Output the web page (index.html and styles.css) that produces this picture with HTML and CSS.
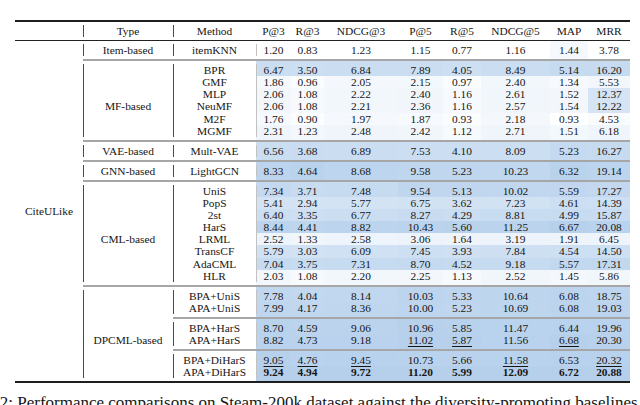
FILE: index.html
```html
<!DOCTYPE html>
<html lang="en">
<head>
<meta charset="utf-8">
<title>Performance comparison</title>
<link rel="stylesheet" href="styles.css">
</head>
<body>
<div class="prev"><p>results of the top-performing approaches, with the best highlighted in bold and the second-best underlined, are given in gray</p></div>
<table class="res">
  <colgroup>
    <col class="c-ds"><col class="c-type"><col class="c-method">
    <col class="c-p3"><col class="c-r3"><col class="c-n3"><col class="c-p5"><col class="c-r5"><col class="c-n5"><col class="c-map"><col class="c-mrr">
  </colgroup>
  <thead>
    <tr><th class="ds"></th><th class="t">Type</th><th class="m">Method</th><th>P@3</th><th>R@3</th><th>NDCG@3</th><th>P@5</th><th>R@5</th><th>NDCG@5</th><th>MAP</th><th>MRR</th></tr>
  </thead>
  <tbody>
    <tr class="first last"><td class="ds" rowspan="23">CiteULike</td><td class="t">Item-based</td><td class="m">itemKNN</td><td class="n p3">1.20</td><td class="n">0.83</td><td class="n">1.23</td><td class="n">1.15</td><td class="n">0.77</td><td class="n">1.16</td><td class="n">1.44</td><td class="n">3.78</td></tr>

    <tr class="rule first"><td class="t mf" rowspan="6">MF-based</td><td class="m">BPR</td><td class="n p3">6.47</td><td class="n">3.50</td><td class="n">6.84</td><td class="n">7.89</td><td class="n">4.05</td><td class="n">8.49</td><td class="n">5.14</td><td class="n">16.20</td></tr>
    <tr><td class="m">GMF</td><td class="n p3">1.86</td><td class="n">0.96</td><td class="n">2.05</td><td class="n">2.15</td><td class="n">0.97</td><td class="n">2.40</td><td class="n">1.34</td><td class="n">5.53</td></tr>
    <tr><td class="m">MLP</td><td class="n p3">2.06</td><td class="n">1.08</td><td class="n">2.22</td><td class="n">2.40</td><td class="n">1.16</td><td class="n">2.61</td><td class="n">1.52</td><td class="n">12.37</td></tr>
    <tr><td class="m">NeuMF</td><td class="n p3">2.06</td><td class="n">1.08</td><td class="n">2.21</td><td class="n">2.36</td><td class="n">1.16</td><td class="n">2.57</td><td class="n">1.54</td><td class="n">12.22</td></tr>
    <tr><td class="m">M2F</td><td class="n p3">1.76</td><td class="n">0.90</td><td class="n">1.97</td><td class="n">1.87</td><td class="n">0.93</td><td class="n">2.18</td><td class="n">0.93</td><td class="n">4.53</td></tr>
    <tr class="last"><td class="m">MGMF</td><td class="n p3">2.31</td><td class="n">1.23</td><td class="n">2.48</td><td class="n">2.42</td><td class="n">1.12</td><td class="n">2.71</td><td class="n">1.51</td><td class="n">6.18</td></tr>

    <tr class="rule first last"><td class="t">VAE-based</td><td class="m">Mult-VAE</td><td class="n p3">6.56</td><td class="n">3.68</td><td class="n">6.89</td><td class="n">7.53</td><td class="n">4.10</td><td class="n">8.09</td><td class="n">5.23</td><td class="n">16.27</td></tr>

    <tr class="rule first last"><td class="t">GNN-based</td><td class="m">LightGCN</td><td class="n p3">8.33</td><td class="n">4.64</td><td class="n">8.68</td><td class="n">9.58</td><td class="n">5.23</td><td class="n">10.23</td><td class="n">6.32</td><td class="n">19.14</td></tr>

    <tr class="rule first"><td class="t cml" rowspan="8">CML-based</td><td class="m">UniS</td><td class="n p3">7.34</td><td class="n">3.71</td><td class="n">7.48</td><td class="n">9.54</td><td class="n">5.13</td><td class="n">10.02</td><td class="n">5.59</td><td class="n">17.27</td></tr>
    <tr><td class="m">PopS</td><td class="n p3">5.41</td><td class="n">2.94</td><td class="n">5.77</td><td class="n">6.75</td><td class="n">3.62</td><td class="n">7.23</td><td class="n">4.61</td><td class="n">14.39</td></tr>
    <tr><td class="m">2st</td><td class="n p3">6.40</td><td class="n">3.35</td><td class="n">6.77</td><td class="n">8.27</td><td class="n">4.29</td><td class="n">8.81</td><td class="n">4.99</td><td class="n">15.87</td></tr>
    <tr><td class="m">HarS</td><td class="n p3">8.44</td><td class="n">4.41</td><td class="n">8.82</td><td class="n">10.43</td><td class="n">5.60</td><td class="n">11.25</td><td class="n">6.67</td><td class="n">20.08</td></tr>
    <tr><td class="m">LRML</td><td class="n p3">2.52</td><td class="n">1.33</td><td class="n">2.58</td><td class="n">3.06</td><td class="n">1.64</td><td class="n">3.19</td><td class="n">1.91</td><td class="n">6.45</td></tr>
    <tr><td class="m">TransCF</td><td class="n p3">5.79</td><td class="n">3.03</td><td class="n">6.09</td><td class="n">7.45</td><td class="n">3.93</td><td class="n">7.84</td><td class="n">4.54</td><td class="n">14.50</td></tr>
    <tr><td class="m">AdaCML</td><td class="n p3">7.04</td><td class="n">3.75</td><td class="n">7.31</td><td class="n">8.70</td><td class="n">4.52</td><td class="n">9.18</td><td class="n">5.57</td><td class="n">17.31</td></tr>
    <tr class="last"><td class="m">HLR</td><td class="n p3">2.03</td><td class="n">1.08</td><td class="n">2.20</td><td class="n">2.25</td><td class="n">1.13</td><td class="n">2.52</td><td class="n">1.45</td><td class="n">5.86</td></tr>

    <tr class="rule first"><td class="t dp" rowspan="6">DPCML-based</td><td class="m">BPA+UniS</td><td class="n p3">7.78</td><td class="n">4.04</td><td class="n">8.14</td><td class="n">10.03</td><td class="n">5.33</td><td class="n">10.64</td><td class="n">6.08</td><td class="n">18.75</td></tr>
    <tr class="last"><td class="m">APA+UniS</td><td class="n p3">7.99</td><td class="n">4.17</td><td class="n">8.36</td><td class="n">10.00</td><td class="n">5.23</td><td class="n">10.69</td><td class="n">6.08</td><td class="n">19.03</td></tr>
    <tr class="rule first"><td class="m">BPA+HarS</td><td class="n p3">8.70</td><td class="n">4.59</td><td class="n">9.06</td><td class="n">10.96</td><td class="n">5.85</td><td class="n">11.47</td><td class="n">6.44</td><td class="n">19.96</td></tr>
    <tr class="last"><td class="m">APA+HarS</td><td class="n p3">8.82</td><td class="n">4.73</td><td class="n">9.18</td><td class="n"><span class="u">11.02</span></td><td class="n"><span class="u">5.87</span></td><td class="n">11.56</td><td class="n"><span class="u">6.68</span></td><td class="n">20.30</td></tr>
    <tr class="rule first"><td class="m">BPA+DiHarS</td><td class="n p3"><span class="u">9.05</span></td><td class="n"><span class="u">4.76</span></td><td class="n"><span class="u">9.45</span></td><td class="n">10.73</td><td class="n">5.66</td><td class="n"><span class="u">11.58</span></td><td class="n">6.53</td><td class="n"><span class="u">20.32</span></td></tr>
    <tr class="last"><td class="m">APA+DiHarS</td><td class="n p3"><b>9.24</b></td><td class="n"><b>4.94</b></td><td class="n"><b>9.72</b></td><td class="n"><b>11.20</b></td><td class="n"><b>5.99</b></td><td class="n"><b>12.09</b></td><td class="n"><b>6.72</b></td><td class="n"><b>20.88</b></td></tr>
  </tbody>
</table>
<p class="cap">Table 2: Performance comparisons on Steam-200k dataset against the diversity-promoting baselines and</p>
<script src="script.js"></script>
</body>
</html>
```

FILE: styles.css
```css
html, body {
  margin: 0;
  padding: 0;
  background: #ffffff;
}
body {
  width: 640px;
  height: 405px;
  overflow: hidden;
  font-family: "Liberation Serif", "Times New Roman", serif;
  color: #161616;
}

.prev {
  height: 6px;
  overflow: hidden;
  font-size: 17px;
  line-height: 20px;
}
.prev p {
  margin: -19px 0 0 4px;
  white-space: nowrap;
}

.res {
  margin: 14px 0 0 15px;
  width: 615px;
  table-layout: fixed;
  border-collapse: separate;
  border-spacing: 0;
  border-top: 2px solid #1e1e1e;
  border-bottom: 2px solid #1e1e1e;
  font-size: 11.4px;
  line-height: 12.1px;
}
.c-ds { width: 68px; }
.c-type { width: 90px; }
.c-method { width: 83px; }
.c-p3 { width: 35px; }
.c-r3 { width: 33px; }
.c-n3 { width: 74px; }
.c-p5 { width: 45px; }
.c-r5 { width: 38px; }
.c-n5 { width: 69px; }
.c-map { width: 38px; }
.c-mrr { width: 42px; }

.res th, .res td {
  padding: 0;
  text-align: center;
  white-space: nowrap;
  font-weight: normal;
  vertical-align: middle;
}
.res thead th {
  padding: 3px 0;
  border-bottom: 1px solid #222;
}

/* vertical bars drawn only over the row content, broken at the rules */
.res th.t, .res th.m,
.res td.t, .res td.m, .res td.p3 {
  --bc: #4a4a4a;
  background-image: linear-gradient(var(--bc), var(--bc));
  background-repeat: no-repeat;
  background-position: 0 0;
  background-size: 1px 100%;
}
.res td.p3 { --bc: #c2c2c2; }
.res th.t, .res th.m, .res td.t {
  background-position: 0 3px;
  background-size: 1px calc(100% - 6px);
}
.res tr.first > td.m, .res tr.first > td.p3 {
  background-position: 0 3px;
  background-size: 1px calc(100% - 3px);
}
.res tr.last > td.m, .res tr.last > td.p3 {
  background-size: 1px calc(100% - 3px);
}
.res tr.first.last > td.m, .res tr.first.last > td.p3 {
  background-position: 0 3px;
  background-size: 1px calc(100% - 6px);
}

.res tr.first > td.m, .res tr.first > td.n { padding-top: 3px; }
.res tr.last > td.m, .res tr.last > td.n { padding-bottom: 3px; }

.res tr.rule > td.t,
.res tr.rule > td.m,
.res tr.rule > td.n {
  border-top: 2px solid #a6a6a6;
}

.res td.t.mf { vertical-align: top; padding-top: 39.3px; }
.res td.t.cml { vertical-align: top; padding-top: 51.4px; }
.res td.t.dp { vertical-align: top; padding-top: 47.3px; }

.res .u {
  text-decoration: underline;
  text-decoration-thickness: 1px;
  text-underline-offset: 1.5px;
}
.res b { font-weight: bold; }

.cap {
  margin: 10px 0 0 -42px;
  font-size: 17px;
  line-height: 20px;
  white-space: nowrap;
}
```

FILE: script.js
```js
(function () {
  var rows = document.querySelectorAll('.res tbody tr');
  var cols = [];
  rows.forEach(function (r) {
    r.querySelectorAll('td.n').forEach(function (td, i) {
      (cols[i] = cols[i] || []).push(td);
    });
  });
  var end = [182, 208, 236];
  cols.forEach(function (list) {
    var vals = list.map(function (td) { return parseFloat(td.textContent); });
    var min = Math.min.apply(null, vals);
    var max = Math.max.apply(null, vals);
    list.forEach(function (td, k) {
      var t = (vals[k] - min) / (max - min);
      var f = Math.pow(t, 0.8);
      var c = end.map(function (e) { return Math.round(255 - (255 - e) * f); });
      td.style.backgroundColor = 'rgb(' + c.join(',') + ')';
    });
  });
})();
```
